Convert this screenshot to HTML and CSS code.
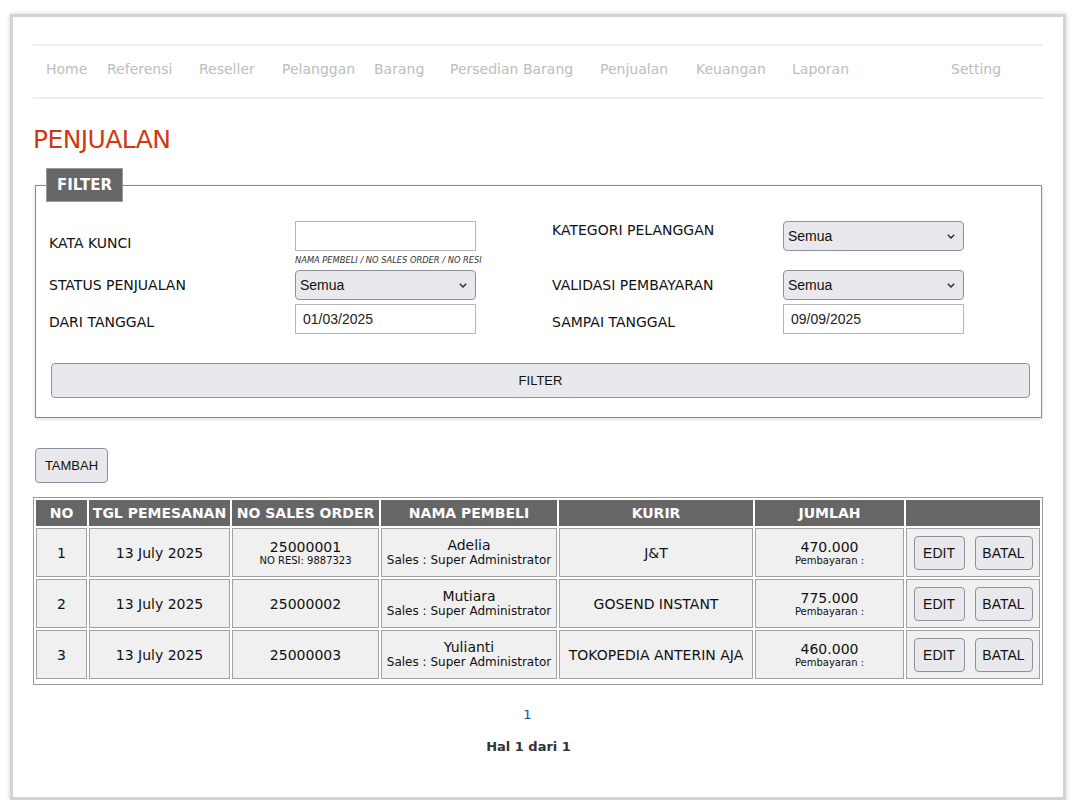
FILE: index.html
```html
<!DOCTYPE html>
<html lang="id">
<head>
<meta charset="utf-8">
<title>Penjualan</title>
<link rel="stylesheet" href="styles.css">
</head>
<body>
<div class="frame">
  <nav class="menu">
    <a href="#">Home</a>
    <a href="#">Referensi</a>
    <a href="#">Reseller</a>
    <a href="#">Pelanggan</a>
    <a href="#">Barang</a>
    <a href="#">Persedian Barang</a>
    <a href="#">Penjualan</a>
    <a href="#">Keuangan</a>
    <a href="#">Laporan</a>
    <a href="#">Setting</a>
  </nav>

  <h1 class="title">PENJUALAN</h1>

  <fieldset class="filter">
    <legend class="filter-legend">FILTER</legend>
    <div class="filter-grid">
      <label class="lbl">KATA KUNCI</label>
      <div class="field">
        <input class="txt" type="text" value="">
        <div class="hint">NAMA PEMBELI / NO SALES ORDER / NO RESI</div>
      </div>
      <label class="lbl lbl-top">KATEGORI PELANGGAN</label>
      <div class="field">
        <span class="sel"><select><option>Semua</option></select><svg class="chev" viewBox="0 0 8 5" width="8" height="5"><path d="M0.8 0.8 L4 4 L7.2 0.8" fill="none" stroke="#222" stroke-width="1.3"/></svg></span>
      </div>

      <label class="lbl">STATUS PENJUALAN</label>
      <div class="field">
        <span class="sel"><select><option>Semua</option></select><svg class="chev" viewBox="0 0 8 5" width="8" height="5"><path d="M0.8 0.8 L4 4 L7.2 0.8" fill="none" stroke="#222" stroke-width="1.3"/></svg></span>
      </div>
      <label class="lbl">VALIDASI PEMBAYARAN</label>
      <div class="field">
        <span class="sel"><select><option>Semua</option></select><svg class="chev" viewBox="0 0 8 5" width="8" height="5"><path d="M0.8 0.8 L4 4 L7.2 0.8" fill="none" stroke="#222" stroke-width="1.3"/></svg></span>
      </div>

      <label class="lbl lbl-low">DARI TANGGAL</label>
      <div class="field"><input class="txt" type="text" value="01/03/2025"></div>
      <label class="lbl lbl-low">SAMPAI TANGGAL</label>
      <div class="field"><input class="txt" type="text" value="09/09/2025"></div>
    </div>
    <button class="btn btn-filter" type="button">FILTER</button>
  </fieldset>

  <div class="toolbar"><button class="btn btn-add" type="button">TAMBAH</button></div>

  <table class="grid">
    <colgroup>
      <col class="c-no"><col class="c-tgl"><col class="c-so"><col class="c-nama"><col class="c-kurir"><col class="c-jml"><col class="c-act">
    </colgroup>
    <thead>
      <tr><th>NO</th><th>TGL PEMESANAN</th><th>NO SALES ORDER</th><th>NAMA PEMBELI</th><th>KURIR</th><th>JUMLAH</th><th></th></tr>
    </thead>
    <tbody>
      <tr>
        <td>1</td>
        <td>13 July 2025</td>
        <td><div class="main">25000001</div><div class="sub">NO RESI: 9887323</div></td>
        <td><div class="main">Adelia</div><div class="sales">Sales : Super Administrator</div></td>
        <td>J&amp;T</td>
        <td><div class="main">470.000</div><div class="sub">Pembayaran :</div></td>
        <td><div class="acts"><button class="btn btn-edit" type="button">EDIT</button><button class="btn btn-batal" type="button">BATAL</button></div></td>
      </tr>
      <tr>
        <td>2</td>
        <td>13 July 2025</td>
        <td>25000002</td>
        <td><div class="main">Mutiara</div><div class="sales">Sales : Super Administrator</div></td>
        <td>GOSEND INSTANT</td>
        <td><div class="main">775.000</div><div class="sub">Pembayaran :</div></td>
        <td><div class="acts"><button class="btn btn-edit" type="button">EDIT</button><button class="btn btn-batal" type="button">BATAL</button></div></td>
      </tr>
      <tr>
        <td>3</td>
        <td>13 July 2025</td>
        <td>25000003</td>
        <td><div class="main">Yulianti</div><div class="sales">Sales : Super Administrator</div></td>
        <td>TOKOPEDIA ANTERIN AJA</td>
        <td><div class="main">460.000</div><div class="sub">Pembayaran :</div></td>
        <td><div class="acts"><button class="btn btn-edit" type="button">EDIT</button><button class="btn btn-batal" type="button">BATAL</button></div></td>
      </tr>
    </tbody>
  </table>

  <div class="pager">
    <a class="page-link" href="#">1</a>
    <div class="page-info">Hal 1 dari 1</div>
  </div>
</div>
</body>
</html>
```

FILE: styles.css
```css
html, body {
  margin: 0;
  background: #fff;
}
body {
  font-family: "DejaVu Sans", Verdana, sans-serif;
  font-size: 14px;
  color: #111;
}

.frame {
  margin: 14px 11px 0 10px;
  height: 786px;
  box-sizing: border-box;
  border: 3px solid #d3d3d3;
  box-shadow: 0 0 5px rgba(0, 0, 0, 0.18);
  padding: 27px 20px 0;
}

/* navigation */
.menu {
  display: grid;
  grid-template-columns: 61px 92px 83px 92px 76px 150px 96px 96px 159px auto;
  padding: 0 0 4px 13px;
  border-top: 2px solid #eeeeee;
  border-bottom: 2px solid #eeeeee;
  line-height: 47px;
}
.menu a {
  color: #bdbdbd;
  text-decoration: none;
  font-size: 14px;
  white-space: nowrap;
}

.title {
  margin: 24px 0 0;
  font-family: "DejaVu Sans", Verdana, sans-serif;
  font-weight: normal;
  font-size: 25px;
  line-height: 34px;
  letter-spacing: -0.6px;
  color: #cc3a12;
}

/* filter box */
.filter {
  margin: 11px 1px 0 2px;
  border: 1px solid #8a8a8a;
  padding: 0 12px 19px 13px;
  box-shadow: 0 1px 4px rgba(0, 0, 0, 0.15);
  min-width: 0;
}
.filter-legend {
  margin-left: -3px;
  padding: 7px 10px;
  background: #666;
  color: #fff;
  font: bold 15px/18px "DejaVu Sans", Verdana, sans-serif;
  border: 1px solid #9a9a9a;
}
.filter-grid {
  display: grid;
  grid-template-columns: 246px 257px 231px 1fr;
  grid-template-rows: 45px 30px 30px;
  row-gap: 4px;
  margin-top: 19px;
}
.lbl {
  align-self: center;
  font-size: 14px;
  line-height: 17px;
  color: #111;
}
.lbl-top {
  align-self: start;
  padding-top: 1px;
}
.lbl-low {
  padding-top: 6px;
}
.field {
  align-self: start;
}
.txt {
  display: block;
  width: 181px;
  height: 30px;
  box-sizing: border-box;
  border: 1px solid #b5b5b5;
  padding: 0 7px;
  margin: 0;
  font: 14px "Liberation Sans", Arial, sans-serif;
  color: #222;
  background: #fff;
}
.hint {
  margin-top: 5px;
  font: italic 8.3px/9px "DejaVu Sans", Verdana, sans-serif;
  color: #333;
  white-space: nowrap;
}
.sel {
  position: relative;
  display: block;
  width: 181px;
  height: 30px;
}
.sel select {
  appearance: none;
  -webkit-appearance: none;
  display: block;
  width: 100%;
  height: 100%;
  margin: 0;
  box-sizing: border-box;
  border: 1px solid #8f8f9d;
  border-radius: 4px;
  background: #e9e9ed;
  font: 14px "Liberation Sans", Arial, sans-serif;
  color: #111;
  padding: 0 0 0 4px;
}
.chev {
  position: absolute;
  right: 9px;
  top: 13px;
  pointer-events: none;
}

/* buttons */
.btn {
  background: #e9e9ed;
  border: 1px solid #8f8f9d;
  border-radius: 4px;
  font: 13px "Liberation Sans", Arial, sans-serif;
  color: #111;
  padding: 0;
  box-sizing: border-box;
}
.btn-filter {
  display: block;
  width: calc(100% - 1px);
  height: 35px;
  margin: 29px 0 0 2px;
}
.toolbar {
  margin-top: 30px;
  padding-left: 2px;
}
.btn-add {
  width: 73px;
  height: 35px;
}

/* table */
.grid {
  margin-top: 14px;
  width: 100%;
  table-layout: fixed;
  border: 1px solid #999;
  border-spacing: 2px;
  padding: 0 0 3px;
}
.c-no { width: 51px; }
.c-tgl { width: 141px; }
.c-so { width: 147px; }
.c-nama { width: 176px; }
.c-kurir { width: 194px; }
.c-jml { width: 149px; }
.c-act { width: 134px; }
.grid th {
  background: #666;
  color: #fff;
  font: bold 14px/18px "DejaVu Sans", Verdana, sans-serif;
  padding: 3px 2px;
  border: 1px solid #666;
  white-space: nowrap;
}
.grid td {
  background: #f0f0f0;
  border: 1px solid #a2a2a2;
  text-align: center;
  vertical-align: middle;
  padding: 0 2px;
  font-size: 14px;
  line-height: 16px;
  white-space: nowrap;
}
.grid tbody tr {
  height: 49px;
}
.main {
  font-size: 14px;
  line-height: 16px;
}
.sub {
  font-size: 10px;
  line-height: 12px;
}
.sales {
  font-size: 12px;
  line-height: 15px;
}
.acts {
  display: flex;
  justify-content: center;
  gap: 10px;
}
.btn-edit,
.btn-batal {
  height: 34px;
  font-size: 14px;
}
.btn-edit { width: 51px; }
.btn-batal { width: 58px; }

/* pagination */
.pager {
  margin-top: 21px;
  padding-right: 21px;
  text-align: center;
}
.page-link {
  font-size: 13px;
  line-height: 16px;
  color: #1e48a8;
  text-decoration: none;
}
.page-info {
  margin-top: 16px;
  margin-left: 2px;
  font: bold 13px/16px "DejaVu Sans", Verdana, sans-serif;
  color: #333;
}
```
